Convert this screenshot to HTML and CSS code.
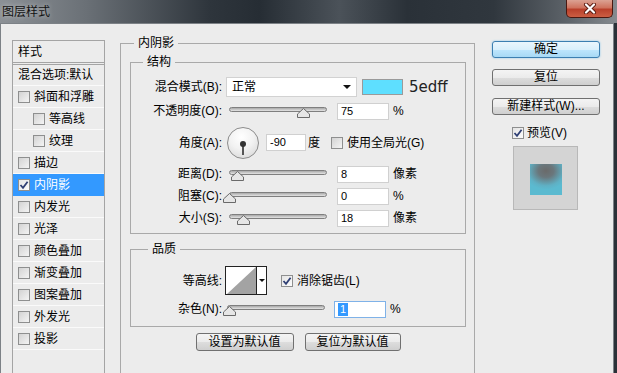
FILE: index.html
```html
<!DOCTYPE html>
<html lang="zh-CN">
<head>
  <meta charset="UTF-8" />
  <meta name="viewport" content="width=device-width, initial-scale=1.0" />
  <title>图层样式</title>
  <link rel="stylesheet" href="styles.css">
</head>
<body>
  <div class="window">
    <div class="titlebar">
      <span class="title">图层样式</span>
      <button class="close" aria-label="关闭">
        <svg width="14" height="11" viewBox="0 0 14 11">
          <path d="M3 1.5 L11 9.5 M11 1.5 L3 9.5" stroke="#5b1b10" stroke-width="4" stroke-linecap="round"/>
          <path d="M3 1.5 L11 9.5 M11 1.5 L3 9.5" stroke="#fff" stroke-width="2.2" stroke-linecap="round"/>
        </svg>
      </button>
    </div>

    <div class="dialog">
      <ul class="styles-list">
        <li class="list-head">样式</li>
        <li class="list-blend">混合选项:默认</li>
        <li><span class="cb"></span>斜面和浮雕</li>
        <li class="sub"><span class="cb"></span>等高线</li>
        <li class="sub"><span class="cb"></span>纹理</li>
        <li><span class="cb"></span>描边</li>
        <li class="active"><span class="cb checked"><svg width="10" height="10" viewBox="0 0 10 10"><path d="M1.5 5 L4 7.8 L8.6 1.8" fill="none" stroke="#2f3f74" stroke-width="1.8"/></svg></span>内阴影</li>
        <li><span class="cb"></span>内发光</li>
        <li><span class="cb"></span>光泽</li>
        <li><span class="cb"></span>颜色叠加</li>
        <li><span class="cb"></span>渐变叠加</li>
        <li><span class="cb"></span>图案叠加</li>
        <li><span class="cb"></span>外发光</li>
        <li><span class="cb"></span>投影</li>
        <li class="list-empty"></li>
      </ul>

      <fieldset class="group main-group">
        <legend>内阴影</legend>

        <fieldset class="group structure">
          <legend>结构</legend>

          <div class="row row-blend">
            <span class="lbl">混合模式(B):</span>
            <div class="select">正常<span class="arrow"></span></div>
            <span class="swatch"></span>
            <span class="hex">5edff</span>
          </div>

          <div class="row row-opacity">
            <span class="lbl">不透明度(O):</span>
            <div class="slider">
              <div class="track"></div>
              <svg class="thumb" style="left: calc(75% - 6px);" width="13" height="10" viewBox="0 0 13 10"><path d="M0.5 9.5 V6 L6.5 0.5 L12.5 6 V9.5 Z" fill="#e6e6e6" stroke="#6a6a6a"/></svg>
            </div>
            <span class="field">75</span>
            <span class="unit">%</span>
          </div>

          <div class="row row-angle">
            <span class="lbl">角度(A):</span>
            <div class="dial"><span class="needle"></span><span class="dot"></span></div>
            <span class="field angle">-90</span>
            <span class="unit deg">度</span>
            <span class="cb global"></span>
            <span>使用全局光(G)</span>
          </div>

          <div class="row row-distance">
            <span class="lbl">距离(D):</span>
            <div class="slider">
              <div class="track"></div>
              <svg class="thumb" style="left: calc(8% - 6px);" width="13" height="10" viewBox="0 0 13 10"><path d="M0.5 9.5 V6 L6.5 0.5 L12.5 6 V9.5 Z" fill="#e6e6e6" stroke="#6a6a6a"/></svg>
            </div>
            <span class="field">8</span>
            <span class="unit">像素</span>
          </div>

          <div class="row row-small">
            <span class="lbl">阻塞(C):</span>
            <div class="slider">
              <div class="track"></div>
              <svg class="thumb" style="left: calc(0% - 6px);" width="13" height="10" viewBox="0 0 13 10"><path d="M0.5 9.5 V6 L6.5 0.5 L12.5 6 V9.5 Z" fill="#e6e6e6" stroke="#6a6a6a"/></svg>
            </div>
            <span class="field">0</span>
            <span class="unit">%</span>
          </div>

          <div class="row row-small">
            <span class="lbl">大小(S):</span>
            <div class="slider">
              <div class="track"></div>
              <svg class="thumb" style="left: calc(14% - 6px);" width="13" height="10" viewBox="0 0 13 10"><path d="M0.5 9.5 V6 L6.5 0.5 L12.5 6 V9.5 Z" fill="#e6e6e6" stroke="#6a6a6a"/></svg>
            </div>
            <span class="field">18</span>
            <span class="unit">像素</span>
          </div>
        </fieldset>

        <fieldset class="group quality">
          <legend>品质</legend>

          <div class="row row-contour">
            <span class="lbl">等高线:</span>
            <div class="contour">
              <svg class="curve" width="30" height="27" viewBox="0 0 30 27"><path d="M1 27 L30 0 L30 27 Z" fill="#a3a3a3"/></svg>
              <span class="contour-arrow"><span class="arrow"></span></span>
            </div>
            <span class="cb checked antialias"><svg width="10" height="10" viewBox="0 0 10 10"><path d="M1.5 5 L4 7.8 L8.6 1.8" fill="none" stroke="#2f3f74" stroke-width="1.8"/></svg></span>
            <span>消除锯齿(L)</span>
          </div>

          <div class="row row-noise">
            <span class="lbl">杂色(N):</span>
            <div class="slider">
              <div class="track"></div>
              <svg class="thumb" style="left: calc(2% - 6px);" width="13" height="10" viewBox="0 0 13 10"><path d="M0.5 9.5 V6 L6.5 0.5 L12.5 6 V9.5 Z" fill="#e6e6e6" stroke="#6a6a6a"/></svg>
            </div>
            <span class="field focused"><span class="sel">1</span></span>
            <span class="unit">%</span>
          </div>
        </fieldset>

        <div class="defaults">
          <button class="btn wide">设置为默认值</button>
          <button class="btn wide reset">复位为默认值</button>
        </div>
      </fieldset>

      <div class="side">
        <button class="btn btn-default">确定</button>
        <button class="btn btn-reset">复位</button>
        <button class="btn btn-new">新建样式(W)...</button>
        <div class="preview-toggle">
          <span class="cb checked"><svg width="10" height="10" viewBox="0 0 10 10"><path d="M1.5 5 L4 7.8 L8.6 1.8" fill="none" stroke="#2f3f74" stroke-width="1.8"/></svg></span>
          <span>预览(V)</span>
        </div>
        <div class="preview">
          <div class="preview-swatch"></div>
        </div>
      </div>
    </div>
  </div>
</body>
</html>
```

FILE: styles.css
```css
* {
  box-sizing: border-box;
}

body {
  margin: 0;
  background: #2a3138;
  font-family: "Liberation Sans", "Noto Sans CJK SC", sans-serif;
  font-size: 12px;
  line-height: 14px;
  color: #000;
}

.window {
  width: 617px;
  height: 373px;
  overflow: hidden;
  background: #2a3138;
}

/* title bar */
.titlebar {
  height: 23px;
  display: flex;
  justify-content: space-between;
  align-items: flex-start;
  background: linear-gradient(90deg, #8c9196 0%, #6a7076 14%, #2e353c 34%, #262d34 42%, #4b5259 55%, #2a3138 66%, #30373e 80%, #5d6369 92%, #868b90 100%);
}

.title {
  padding-left: 2px;
  line-height: 24px;
  color: #111;
  text-shadow: 0 0 5px rgba(255, 255, 255, 0.55);
}

.close {
  width: 47px;
  height: 18px;
  margin-right: 4px;
  padding: 0;
  border: 1px solid #4a1810;
  border-top: none;
  border-radius: 0 0 5px 5px;
  background: linear-gradient(#dba293 0%, #cf735e 45%, #b9402b 55%, #cc5e43 100%);
  display: flex;
  align-items: center;
  justify-content: center;
}

/* dialog body */
.dialog {
  display: flex;
  align-items: flex-start;
  width: 614px;
  height: 350px;
  background: #ececec;
  border: 1px solid #7c8186;
  border-bottom: none;
  overflow: hidden;
}

/* left list */
.styles-list {
  list-style: none;
  margin: 16px 0 0 11px;
  padding: 0;
  width: 93px;
  height: 340px;
  flex: none;
  border: 1px solid #a4a4a4;
  border-bottom: none;
}

.styles-list li {
  display: flex;
  align-items: center;
  height: 22px;
  padding-left: 5px;
  border-bottom: 1px solid #fafafa;
  white-space: nowrap;
}

.styles-list .list-head {
  height: 24px;
  border-bottom: 3px double #a4a4a4;
}

.styles-list .list-blend {
  height: 21px;
}

.styles-list .sub {
  padding-left: 20px;
}

.styles-list .active {
  background: #3399ff;
  border-bottom-color: #3399ff;
  color: #fff;
}

.styles-list .list-empty {
  border-bottom: none;
}

/* checkbox */
.cb {
  width: 12px;
  height: 12px;
  flex: none;
  margin-right: 4px;
  border: 1px solid #8e8f8f;
  background: linear-gradient(135deg, #d3d3d3 0%, #f4f4f4 100%);
  display: flex;
  align-items: center;
  justify-content: center;
}

.cb.checked {
  background: linear-gradient(135deg, #e4e4e4 0%, #fcfcfc 100%);
}

/* group boxes */
fieldset.group {
  margin: 0;
  padding: 0;
  min-width: 0;
  border: 1px solid #a9a9a9;
}

fieldset.group legend {
  padding: 0 4px;
  height: 14px;
  line-height: 14px;
}

fieldset.main-group {
  margin: 12px 0 0 15px;
  width: 355px;
  height: 360px;
  flex: none;
  padding: 0 8px 0 9px;
  border-bottom: none;
}

fieldset.main-group > legend {
  margin-left: 4px;
}

fieldset.structure {
  margin-top: 5px;
  padding-bottom: 6px;
}

fieldset.structure > legend {
  margin-left: 12px;
}

fieldset.quality {
  margin-top: 8px;
  padding-bottom: 8px;
}

fieldset.quality > legend {
  margin-left: 17px;
}

/* rows */
.row {
  display: flex;
  align-items: center;
  white-space: nowrap;
}

.lbl {
  width: 91px;
  flex: none;
  text-align: right;
}

.row-blend {
  margin-top: 8px;
  height: 20px;
}

.row-opacity {
  margin-top: 5px;
  height: 18px;
}

.row-angle {
  margin-top: 6px;
  height: 33px;
}

.row-distance {
  margin-top: 6px;
  height: 18px;
}

.row-small {
  margin-top: 4px;
  height: 18px;
}

.select {
  margin-left: 4px;
  width: 131px;
  height: 20px;
  padding: 0 5px 0 5px;
  display: flex;
  align-items: center;
  justify-content: space-between;
  background: #fff;
  border: 1px solid #d2d2d2;
}

.arrow {
  width: 0;
  height: 0;
  border-left: 4px solid transparent;
  border-right: 4px solid transparent;
  border-top: 4px solid #111;
}

.swatch {
  margin-left: 5px;
  width: 41px;
  height: 16px;
  background: #5edfff;
  border: 1px solid #9a9a9a;
}

.hex {
  margin-left: 6px;
  font-family: "DejaVu Sans", sans-serif;
  font-size: 15px;
  color: #222;
}

/* slider */
.slider {
  position: relative;
  margin-left: 7px;
  width: 98px;
  height: 18px;
  flex: none;
}

.track {
  margin-top: 5px;
  height: 5px;
  border: 1px solid #7f7f7f;
  border-radius: 3px;
  background: linear-gradient(#a9a9a9, #e4e4e4);
}

.thumb {
  position: absolute;
  top: 6px;
}

.field {
  margin-left: 10px;
  width: 52px;
  height: 17px;
  flex: none;
  padding-left: 3px;
  background: #fff;
  border: 1px solid #d0d0d0;
  font-size: 11px;
  line-height: 15px;
}

.unit {
  margin-left: 4px;
}

/* angle */
.dial {
  position: relative;
  margin-left: 5px;
  width: 32px;
  height: 32px;
  flex: none;
  border: 1px solid #8c8c8c;
  border-radius: 50%;
  background: radial-gradient(circle at 45% 30%, #ffffff 0%, #f2f2f2 45%, #d2d2d2 100%);
}

.needle {
  position: absolute;
  left: 14px;
  top: 15px;
  width: 2px;
  height: 12px;
  background: #555;
}

.dot {
  position: absolute;
  left: 12px;
  top: 13px;
  width: 6px;
  height: 6px;
  border-radius: 50%;
  background: #333;
}

.field.angle {
  margin-left: 7px;
  width: 40px;
}

.unit.deg {
  margin-left: 2px;
}

.cb.global {
  margin-left: 11px;
}

/* quality */
.row-contour {
  margin-top: 10px;
  height: 29px;
}

.contour {
  margin-left: 3px;
  display: flex;
  height: 29px;
  border: 1px solid #222;
  background: #fff;
}

.curve {
  display: block;
}

.contour-arrow {
  width: 10px;
  border-left: 1px solid #222;
  display: flex;
  align-items: center;
  justify-content: center;
}

.contour-arrow .arrow {
  border-left-width: 3px;
  border-right-width: 3px;
  border-top-width: 3px;
}

.cb.antialias {
  margin-left: 14px;
}

.row-noise {
  margin-top: 5px;
  height: 18px;
}

.row-noise .slider {
  margin-left: 5px;
}

.row-noise .field {
  margin-left: 9px;
}

.field.focused {
  border-color: #7fb2e8;
}

.sel {
  display: inline-block;
  padding: 0 2px;
  background: #3399ff;
  color: #fff;
  line-height: 13px;
}

/* buttons */
.btn {
  display: block;
  height: 17px;
  padding: 0;
  border: 1px solid #707070;
  border-radius: 3px;
  background: linear-gradient(#f4f4f4 0%, #ebebeb 50%, #dddddd 51%, #cfcfcf 100%);
  font-family: "Liberation Sans", "Noto Sans CJK SC", sans-serif;
  font-size: 12px;
  line-height: 15px;
  color: #000;
  text-align: center;
}

.defaults {
  display: flex;
  justify-content: center;
  gap: 11px;
  margin-top: 6px;
}

.btn.wide {
  width: 98px;
  height: 18px;
}

.btn.wide.reset {
  width: 96px;
}

.side {
  margin: 17px 0 0 17px;
  width: 108px;
  flex: none;
  display: flex;
  flex-direction: column;
}

.side .btn {
  width: 108px;
}

.btn-default {
  border-color: #3c7fb1;
  background: linear-gradient(#eaf6fd 0%, #d9f0fc 50%, #bee6fd 51%, #a7d9f5 100%);
  box-shadow: 0 0 2px #7ec3ea;
}

.btn-reset {
  margin-top: 11px;
}

.btn-new {
  margin-top: 12px;
}

.preview-toggle {
  margin-top: 12px;
  height: 12px;
  padding-left: 20px;
  display: flex;
  align-items: center;
}

.preview-toggle .cb {
  margin-right: 3px;
}

.preview {
  margin: 7px 0 0 21px;
  width: 65px;
  height: 64px;
  border: 1px solid #b8b8b8;
  background: #d4d4d4;
  display: flex;
  align-items: center;
  justify-content: center;
}

.preview-swatch {
  width: 32px;
  height: 31px;
  margin-top: 2px;
  background: radial-gradient(ellipse 70% 60% at 50% 22%, #6a6a6a 0%, #6a777c 35%, #5fb0c4 80%, #5bbad0 100%);
}
```
